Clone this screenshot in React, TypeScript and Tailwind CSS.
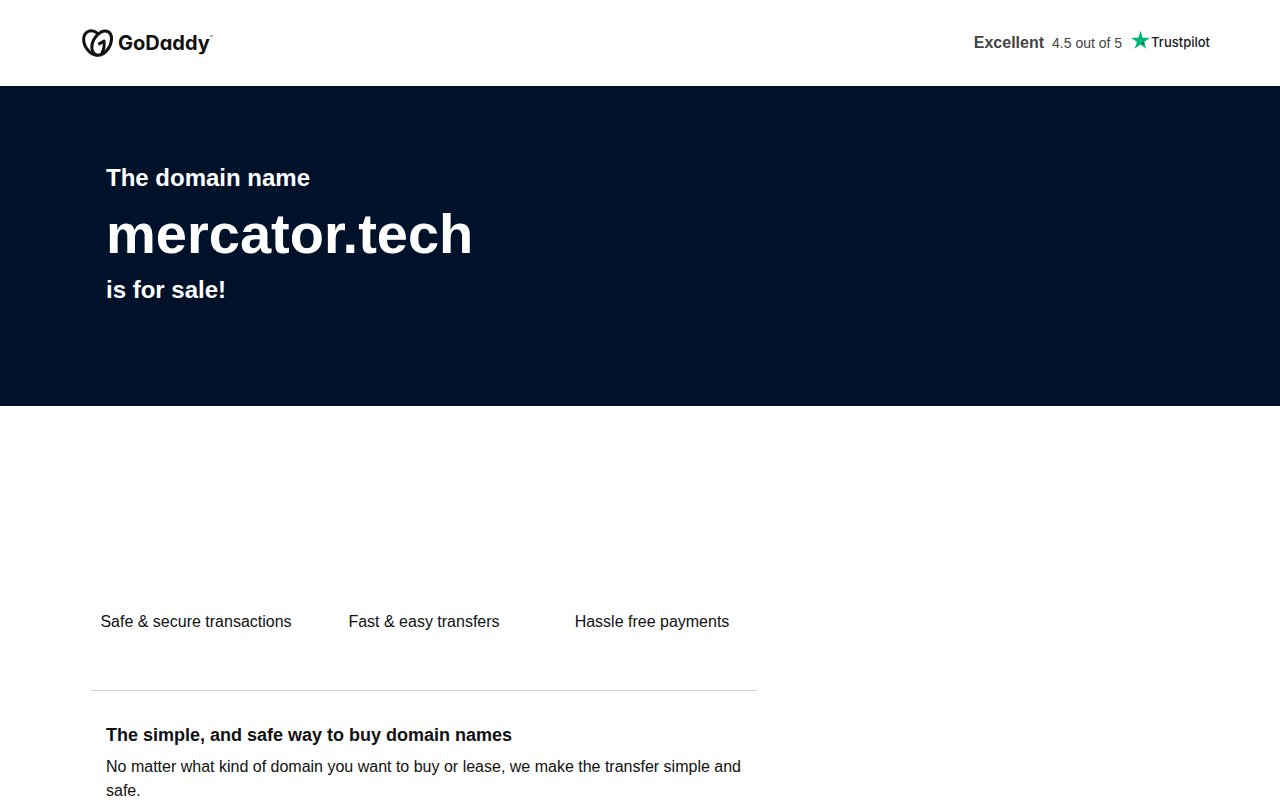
const FEATURES = [
  "Safe & secure transactions",
  "Fast & easy transfers",
  "Hassle free payments",
];

function Logo() {
  return (
    <a
      href="#"
      aria-label="GoDaddy"
      className="flex items-center gap-[5px] text-[#111111]"
    >
      <svg
        viewBox="0 0 93 84"
        className="h-7 w-[31px]"
        fill="none"
        stroke="currentColor"
        strokeWidth="9"
        strokeLinejoin="round"
        aria-hidden
      >
        <path d="M46 79C26 78 5 56 5 31 5 6 28-2 47 13" />
        <path d="M46 79C28 75 25 50 36 31 47 11 66 1 78 8 93 16 91 42 78 60 69 73 58 79 46 79z" />
        <path d="M49 46 66 36C68 50 66 62 59 73" />
      </svg>
      <span className="flex items-start font-[Inter,sans-serif] text-xl leading-8 font-bold [font-feature-settings:'cv11']">
        GoDaddy
        <svg viewBox="0 0 6 4" className="mt-2 h-[2px] w-[3px]" aria-hidden>
          <path
            d="M0 .5h2.4M1.2.5V4M3.2 4V.5L4.4 3 5.6.5V4"
            fill="none"
            stroke="currentColor"
            strokeWidth="0.6"
          />
        </svg>
      </span>
    </a>
  );
}

function TrustpilotRating() {
  return (
    <div className="flex items-center text-[#444444]">
      <span className="text-base font-bold">Excellent</span>
      <span className="ml-2 text-sm">4.5 out of 5</span>
      <a
        href="#"
        className="ml-2 flex items-center font-[Inter,sans-serif] text-[13px] font-medium text-[#191919]"
      >
        <svg viewBox="0 0 20 19" className="mb-1.5 h-5 w-[21px]" aria-hidden>
          <path
            fill="#00b67a"
            d="M19 7.3h-6.9L10 .8 7.9 7.3H1l5.6 4-2.2 6.5 5.6-4 5.6 4-2.2-6.5z"
          />
          <path fill="#005128" d="m13.9 12.8-.5-1.5L10 13.8z" />
        </svg>
        Trustpilot
      </a>
    </div>
  );
}

export default function App() {
  return (
    <div className="bg-white font-['Liberation_Sans',Arial,sans-serif] text-[#111111]">
      <header className="mx-auto flex h-[86px] max-w-[1140px] items-center justify-between pl-3">
        <Logo />
        <TrustpilotRating />
      </header>

      <section className="bg-[#00112a] pt-19 pb-25 font-bold text-white">
        <div className="mx-auto max-w-[1140px] px-9">
          <p className="text-2xl leading-8">The domain name</p>
          <h1 className="text-[56px] leading-20">mercator.tech</h1>
          <p className="text-2xl leading-8">is for sale!</p>
        </div>
      </section>

      <main className="mx-auto max-w-[1140px] px-3 pt-51">
        <div className="max-w-[684px]">
          <ul className="grid grid-cols-3 pb-14 text-center">
            {FEATURES.map((feature) => (
              <li key={feature}>{feature}</li>
            ))}
          </ul>
          <section className="mx-2 border-t border-[#d6d6d6] px-4 pt-8">
            <h2 className="text-lg leading-6 font-bold">
              The simple, and safe way to buy domain names
            </h2>
            <p className="mt-2">
              No matter what kind of domain you want to buy or lease, we make
              the transfer simple and safe.
            </p>
          </section>
        </div>
      </main>
    </div>
  );
}
